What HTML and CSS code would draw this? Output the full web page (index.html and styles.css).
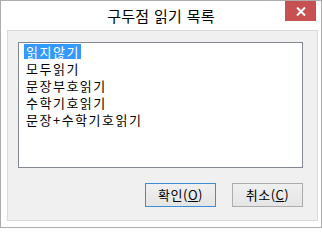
FILE: index.html
```html
<!DOCTYPE html>
<html lang="ko">
<head>
<meta charset="utf-8">
<title>구두점 읽기 목록</title>
<link rel="stylesheet" href="styles.css">
</head>
<body>
<div class="window">
  <div class="titlebar">
    <div class="spacer"></div>
    <div class="title">구두점 읽기 목록</div>
    <div class="controls">
      <div class="close">
        <svg width="10" height="9" viewBox="0 0 10 9"><path d="M1 0.5 L9 8.5 M9 0.5 L1 8.5" stroke="#fff" stroke-width="2" fill="none"/></svg>
      </div>
    </div>
  </div>
  <div class="frame">
    <div class="client">
      <ul class="listbox">
        <li class="item selected"><span class="label">읽지않기</span></li>
        <li class="item"><span class="label">모두읽기</span></li>
        <li class="item"><span class="label">문장부호읽기</span></li>
        <li class="item"><span class="label">수학기호읽기</span></li>
        <li class="item"><span class="label">문장+수학기호읽기</span></li>
      </ul>
      <div class="buttons">
        <button class="btn default">확인(<u>O</u>)</button>
        <button class="btn">취소(<u>C</u>)</button>
      </div>
    </div>
  </div>
</div>
</body>
</html>
```

FILE: styles.css
```css
html, body {
  margin: 0;
  padding: 0;
  background: #ffffff;
}
body {
  width: 322px;
  height: 228px;
  overflow: hidden;
  font-family: "Noto Sans CJK KR", "Noto Sans", sans-serif;
}
.window {
  box-sizing: border-box;
  width: 322px;
  height: 228px;
  border: 1px solid #adadad;
  background: #ffffff;
  display: flex;
  flex-direction: column;
}
.titlebar {
  height: 29px;
  display: grid;
  grid-template-columns: 1fr auto 1fr;
  align-items: start;
}
.title {
  font-size: 15px;
  line-height: 15px;
  margin-top: 7px;
  color: #000000;
  white-space: nowrap;
  letter-spacing: 0.3px;
}
.controls {
  display: flex;
  justify-content: flex-end;
}
.close {
  width: 31px;
  height: 20px;
  margin-right: 5px;
  background: #c75050;
  display: flex;
  align-items: center;
  justify-content: center;
}
.close svg {
  display: block;
}
.frame {
  flex: 1;
  padding: 0 6px 6px 6px;
  display: flex;
}
.client {
  flex: 1;
  border: 1px solid #dadada;
  background: #f0f0f0;
  padding: 11px 14px 13px 10px;
  display: flex;
  flex-direction: column;
}
.listbox {
  list-style: none;
  margin: 0;
  width: 285px;
  height: 126px;
  box-sizing: border-box;
  border: 1px solid #828790;
  background: #ffffff;
  padding: 1px 0 0 5px;
}
.item {
  height: 17px;
  font-size: 13px;
  line-height: 15px;
  color: #000000;
  letter-spacing: 1.5px;
  white-space: nowrap;
}
.label {
  display: inline-block;
  height: 15px;
  padding: 0 1px 0 2px;
}
.selected .label {
  background: #3399ff;
  color: #ffffff;
}
.buttons {
  margin-top: 15px;
  display: flex;
  justify-content: flex-end;
  gap: 16px;
}
.btn {
  width: 71px;
  height: 24px;
  box-sizing: border-box;
  border: 1px solid #acacac;
  background: linear-gradient(#f0f0f0, #e5e5e5);
  font-family: "Noto Sans CJK KR", "Noto Sans", sans-serif;
  font-size: 13px;
  line-height: 16px;
  color: #000000;
  padding: 0;
  letter-spacing: 0.5px;
}
.btn u {
  text-decoration: underline;
}
.btn.default {
  border-color: #3c8cd6;
}
```
